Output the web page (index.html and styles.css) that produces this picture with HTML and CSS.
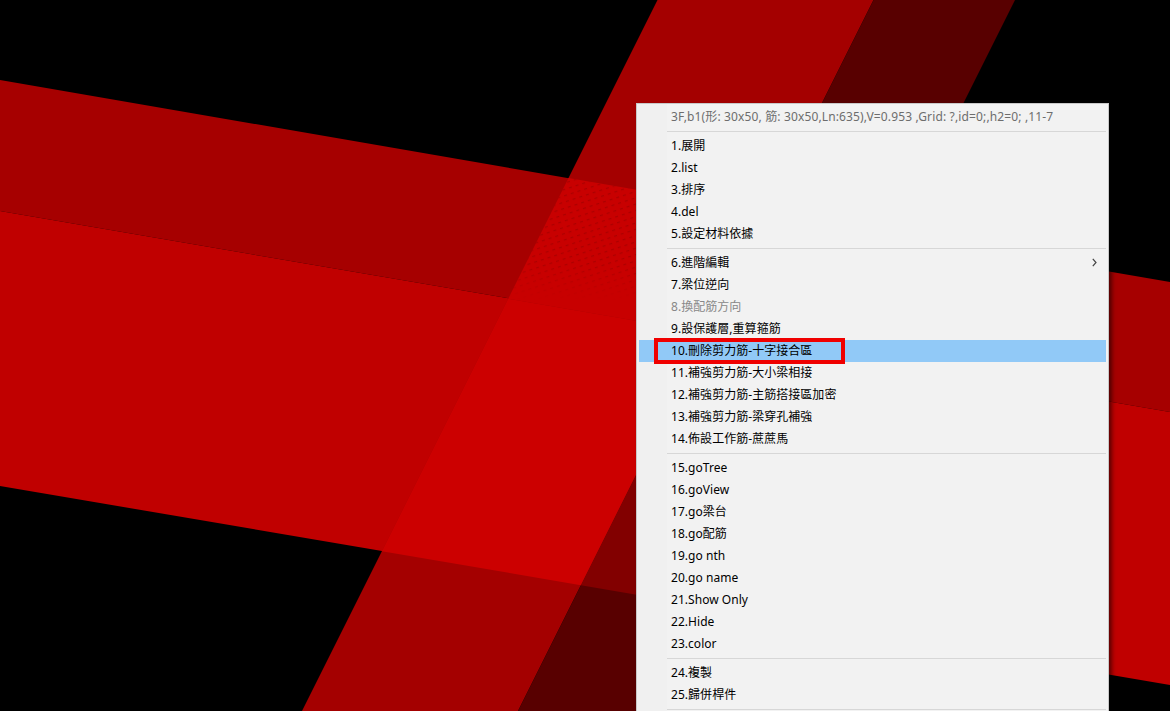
FILE: index.html
```html
<!DOCTYPE html>
<html lang="en">
<head>
    <meta charset="UTF-8">
    <meta name="viewport" content="width=device-width, initial-scale=1.0">
    <title>Beam menu</title>
    <link rel="stylesheet" href="styles.css">
</head>
<body>
    <div class="viewport">
        <svg class="scene" width="1170" height="711" viewBox="0 0 1170 711">
            <defs>
                <pattern id="moire" width="7" height="6" patternUnits="userSpaceOnUse" patternTransform="rotate(-18)">
                    <rect x="0" y="0" width="3" height="1.2" fill="#980000"></rect>
                </pattern>
                <linearGradient id="fade" gradientUnits="userSpaceOnUse" x1="590" y1="180" x2="590" y2="300">
                    <stop offset="0" stop-color="#fff" stop-opacity="0.6"></stop>
                    <stop offset="0.7" stop-color="#fff" stop-opacity="0.55"></stop>
                    <stop offset="1" stop-color="#fff" stop-opacity="0"></stop>
                </linearGradient>
                <mask id="fadeMask" maskUnits="userSpaceOnUse" x="0" y="0" width="1170" height="711">
                    <rect width="1170" height="711" fill="url(#fade)"></rect>
                </mask>
            </defs>
            <polygon fill="#a60000" points="0,80 1170,282 1170,412 0,211"></polygon>
            <polygon fill="#c00000" points="0,211 1170,412 1170,685 0,486"></polygon>
            <polygon fill="#a40000" points="657.5,0 873.5,0 518,711 302,711"></polygon>
            <polygon fill="#580000" points="873.5,0 1015,0 659.5,711 518,711"></polygon>
            <polygon fill="#c80000" points="568.5,178 767.3,212.4 707,333 508.2,298.7"></polygon>
            <polygon fill="#cc0000" points="508.2,298.7 707,333 580.9,585.2 381.9,551.2"></polygon>
            <polygon fill="#820000" points="707,333 837.3,355.4 711.2,607.5 580.9,585.2"></polygon>
            <polygon fill="#700000" points="767.3,212.4 897.6,234.8 837.3,355.4 707,333"></polygon>
            <polygon fill="url(#moire)" mask="url(#fadeMask)" points="568.5,178 767.3,212.4 707,333 508.2,298.7"></polygon>
        </svg>

        <div class="menu">
            <div class="item title">3F,b1(形: 30x50, 筋: 30x50,Ln:635),V=0.953 ,Grid: ?,id=0;,h2=0; ,11-7</div>
            <div class="sep"></div>
            <div class="item">1.展開</div>
            <div class="item">2.list</div>
            <div class="item">3.排序</div>
            <div class="item">4.del</div>
            <div class="item">5.設定材料依據</div>
            <div class="sep"></div>
            <div class="item">6.進階編輯
                <svg class="arrow" width="5" height="9" viewBox="0 0 5 9"><path d="M0.8 0.8L4 4.5L0.8 8.2" fill="none" stroke="#444" stroke-width="1.2"></path></svg>
            </div>
            <div class="item">7.梁位逆向</div>
            <div class="item disabled">8.換配筋方向</div>
            <div class="item">9.設保護層,重算箍筋</div>
            <div class="item active">10.刪除剪力筋-十字接合區<span class="mark"></span></div>
            <div class="item">11.補強剪力筋-大小梁相接</div>
            <div class="item">12.補強剪力筋-主筋搭接區加密</div>
            <div class="item">13.補強剪力筋-梁穿孔補強</div>
            <div class="item">14.佈設工作筋-蔗蔗馬</div>
            <div class="sep"></div>
            <div class="item">15.goTree</div>
            <div class="item">16.goView</div>
            <div class="item">17.go梁台</div>
            <div class="item">18.go配筋</div>
            <div class="item">19.go nth</div>
            <div class="item">20.go name</div>
            <div class="item">21.Show Only</div>
            <div class="item">22.Hide</div>
            <div class="item">23.color</div>
            <div class="sep"></div>
            <div class="item">24.複製</div>
            <div class="item">25.歸併桿件</div>
            <div class="sep"></div>
        </div>
    </div>
</body>
</html>
```

FILE: styles.css
```css
html, body {
    margin: 0;
    background-color: #000;
}
.viewport {
    position: relative;
    width: 1170px;
    height: 711px;
    overflow: hidden;
}
.scene {
    position: absolute;
    left: 0;
    top: 0;
    display: block;
}
.menu {
    position: absolute;
    left: 636px;
    top: 103px;
    width: 471px;
    padding: 2px 0;
    border: 1px solid #c8c8c8;
    background: linear-gradient(to right, #f0f0f0 30px, #f2f2f2 30px);
    box-shadow: 3px 3px 4px rgba(0, 0, 0, 0.5);
    color: #000;
    font-family: "Noto Sans", "Noto Sans CJK TC", sans-serif;
    font-size: 12px;
    letter-spacing: 0.04px;
}
.item {
    position: relative;
    height: 22px;
    line-height: 22px;
    margin: 0 2px;
    padding-left: 32px;
    white-space: nowrap;
}
.title {
    color: #6d6d6d;
    letter-spacing: 0.14px;
}
.disabled {
    color: #888;
}
.active {
    background-color: #91c9f7;
}
.mark {
    position: absolute;
    left: 15px;
    top: -2px;
    width: 183px;
    height: 18px;
    border: 4px solid #f00000;
}
.sep {
    height: 1px;
    margin: 3px 2px 3px 30px;
    background-color: #d7d7d7;
}
.arrow {
    position: absolute;
    right: 9px;
    top: 6px;
}
```
